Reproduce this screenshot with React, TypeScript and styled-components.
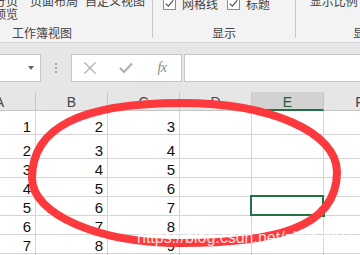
import React from 'react';
import styled, { createGlobalStyle } from 'styled-components';

const Global = createGlobalStyle`
  html, body { margin: 0; padding: 0; background: #e6e6e6; overflow: hidden; }
  body { font-family: "Noto Sans CJK SC", "Liberation Sans", sans-serif; }
`;

const Page = styled.div`
  position: relative;
  width: 360px;
  height: 255px;
  overflow: hidden;
  background: #e6e6e6;
`;

const Ribbon = styled.div`
  box-sizing: border-box;
  height: 43px;
  background: #f3f3f3;
  border-bottom: 1px solid #d5d5d5;
  display: flex;
  align-items: flex-start;
  overflow: hidden;
  color: #444;
  font-family: "Noto Sans CJK SC", sans-serif;
  font-size: 12px;
`;

const Group = styled.div<{ $w: number; $offset?: number }>`
  flex: none;
  width: ${p => p.$w}px;
  margin-left: ${p => p.$offset ?? 0}px;
  display: flex;
  flex-direction: column;
`;

const Controls = styled.div`
  height: 26px;
  display: flex;
  align-items: flex-start;
`;

const GroupLabel = styled.div`
  height: 13px;
  line-height: 13px;
  text-align: center;
  white-space: nowrap;
`;

const Divider = styled.div`
  flex: none;
  width: 1px;
  height: 38px;
  background: #c6c6c6;
`;

const BigButton = styled.div<{ $w: number }>`
  flex: none;
  width: ${p => p.$w}px;
  margin-top: -6px;
  line-height: 13px;
  text-align: center;
  white-space: pre;
`;

const CheckRow = styled.div`
  display: flex;
  align-items: center;
  margin-top: -3px;
  padding-left: 10px;
  height: 13px;
`;

const CheckBox = styled.span`
  box-sizing: border-box;
  flex: none;
  width: 13px;
  height: 13px;
  border: 1px solid #8c8c8c;
  background: #fff;
  display: flex;
  align-items: center;
  justify-content: center;
`;

const CheckLabel = styled.span<{ $after: number }>`
  margin-left: 6px;
  margin-right: ${p => p.$after}px;
  line-height: 13px;
  white-space: nowrap;
`;

const FormulaBar = styled.div`
  box-sizing: border-box;
  height: 49px;
  padding-top: 11px;
  display: flex;
  align-items: flex-start;
`;

const NameBox = styled.div`
  box-sizing: border-box;
  flex: none;
  width: 41px;
  height: 28px;
  background: #fff;
  border: 1px solid #c6c6c6;
  border-left: none;
  display: flex;
  align-items: center;
  justify-content: flex-end;
  padding-right: 6px;
`;

const DropArrow = styled.span`
  width: 0;
  height: 0;
  border-left: 3.5px solid transparent;
  border-right: 3.5px solid transparent;
  border-top: 4px solid #666;
`;

const Grip = styled.div`
  flex: none;
  width: 30px;
  height: 28px;
  display: flex;
  flex-direction: column;
  align-items: center;
  justify-content: center;
  gap: 2px;
`;

const GripDot = styled.span`
  width: 2px;
  height: 2px;
  background: #a6a6a6;
`;

const FxBox = styled.div`
  box-sizing: border-box;
  flex: none;
  width: 111px;
  height: 28px;
  background: #fff;
  border: 1px solid #c6c6c6;
  display: flex;
  align-items: center;
`;

const FxSlot = styled.div`
  flex: none;
  width: 36px;
  height: 26px;
  display: flex;
  align-items: center;
  justify-content: center;
`;

const FxText = styled.span`
  font-family: "Liberation Serif", serif;
  font-style: italic;
  font-size: 14px;
  color: #8c8c8c;
  letter-spacing: -0.5px;
`;

const InputBox = styled.div`
  box-sizing: border-box;
  flex: 1;
  height: 28px;
  margin-left: 2px;
  margin-right: -4px;
  background: #fff;
  border: 1px solid #c6c6c6;
`;

const Sheet = styled.div`
  margin-left: -36px;
  display: grid;
  grid-template-columns: repeat(6, 72px);
  grid-template-rows: 19px 24px 24px repeat(6, 19px);
  background: #fff;
`;

const ColHead = styled.div<{ $sel?: boolean }>`
  box-sizing: border-box;
  background: ${p => (p.$sel ? '#d2d2d2' : '#e6e6e6')};
  border-right: 1px solid #c6c6c6;
  border-bottom: ${p => (p.$sel ? '2px solid #217346' : '1px solid #c6c6c6')};
  padding-top: 3px;
  text-align: center;
  font-family: "Liberation Sans", sans-serif;
  font-size: 14px;
  line-height: 15px;
  color: ${p => (p.$sel ? '#1f5c3a' : '#444')};
`;

const Cell = styled.div`
  position: relative;
  box-sizing: border-box;
  border-right: 1px solid #d4d4d4;
  border-bottom: 1px solid #d4d4d4;
  display: flex;
  align-items: flex-end;
  justify-content: flex-end;
  padding: 0 4px 1px 0;
  font-family: "Liberation Sans", sans-serif;
  font-size: 15px;
  line-height: 12px;
  color: #111;
`;

const Selection = styled.div`
  position: absolute;
  z-index: 2;
  left: -2px;
  top: -2px;
  width: 74px;
  height: 21px;
  box-sizing: border-box;
  border: 2px solid #217346;
`;

const FillHandle = styled.span`
  position: absolute;
  right: -3px;
  bottom: -3px;
  width: 5px;
  height: 5px;
  background: #217346;
  border: 1px solid #fff;
  border-right: none;
  border-bottom: none;
`;

const Ink = styled.svg`
  position: absolute;
  left: 0;
  top: 0;
  z-index: 5;
  pointer-events: none;
`;

const Watermark = styled.div`
  position: absolute;
  z-index: 6;
  left: 137px;
  top: 230px;
  font-family: "Liberation Sans", sans-serif;
  font-size: 16px;
  line-height: 16px;
  color: rgba(255, 255, 255, 0.82);
  white-space: nowrap;
`;

const Check = () => (
  <svg width="11" height="11" viewBox="0 0 11 11">
    <path d="M1.8 5.6 L4.3 8.2 L9.3 2.4" fill="none" stroke="#505050" strokeWidth="1.2" />
  </svg>
);

const columns = ['A', 'B', 'C', 'D', 'E', 'F'];
const rows = [
  [1, 2, 3],
  [2, 3, 4],
  [3, 4, 5],
  [4, 5, 6],
  [5, 6, 7],
  [6, 7, 8],
  [7, 8, 9],
  [8, 9, 10],
];

export default function App() {
  return (
    <Page>
      <Global />
      <Ribbon>
        <Group $w={220} $offset={-68}>
          <Controls>
            <BigButton $w={50}>普通</BigButton>
            <BigButton $w={48}>{'分页\n预览'}</BigButton>
            <BigButton $w={48}>页面布局</BigButton>
            <BigButton $w={74}>自定义视图</BigButton>
          </Controls>
          <GroupLabel>工作簿视图</GroupLabel>
        </Group>
        <Divider />
        <Group $w={142}>
          <Controls>
            <CheckRow>
              <CheckBox><Check /></CheckBox>
              <CheckLabel $after={9}>网格线</CheckLabel>
              <CheckBox><Check /></CheckBox>
              <CheckLabel $after={0}>标题</CheckLabel>
            </CheckRow>
          </Controls>
          <GroupLabel>显示</GroupLabel>
        </Group>
        <Divider />
        <Group $w={162}>
          <Controls>
            <BigButton $w={70}>{'  显示比例'}</BigButton>
          </Controls>
          <GroupLabel>显示比例</GroupLabel>
        </Group>
      </Ribbon>

      <FormulaBar>
        <NameBox>
          <DropArrow />
        </NameBox>
        <Grip>
          <GripDot />
          <GripDot />
          <GripDot />
        </Grip>
        <FxBox>
          <FxSlot>
            <svg width="14" height="12" viewBox="0 0 14 12">
              <path d="M1.5 0.5 L12.5 11.5 M12.5 0.5 L1.5 11.5" stroke="#b0b0b0" strokeWidth="1.3" />
            </svg>
          </FxSlot>
          <FxSlot>
            <svg width="14" height="12" viewBox="0 0 14 12">
              <path d="M1 6 L5 10 L13 1.5" fill="none" stroke="#b0b0b0" strokeWidth="2.2" />
            </svg>
          </FxSlot>
          <FxSlot>
            <FxText>fx</FxText>
          </FxSlot>
        </FxBox>
        <InputBox />
      </FormulaBar>

      <Sheet>
        {columns.map(c => (
          <ColHead key={c} $sel={c === 'E'}>{c}</ColHead>
        ))}
        {rows.map((r, ri) =>
          columns.map((c, ci) => (
            <Cell key={`${ri}-${c}`}>
              {ci < 3 ? r[ci] : null}
              {ri === 4 && c === 'E' ? (
                <Selection>
                  <FillHandle />
                </Selection>
              ) : null}
            </Cell>
          ))
        )}
      </Sheet>

      <Ink width="360" height="255" viewBox="0 0 360 255">
        <path
          d="M32 178 C32 128 80 103 182 103 C270 103 337 132 337 172 C337 230 270 243 180 243 C100 243 32 215 32 178 Z"
          fill="none"
          stroke="#fc3a3d"
          strokeWidth="8"
        />
      </Ink>
      <Watermark>https://blog.csdn.net/zhys2007</Watermark>
    </Page>
  );
}
